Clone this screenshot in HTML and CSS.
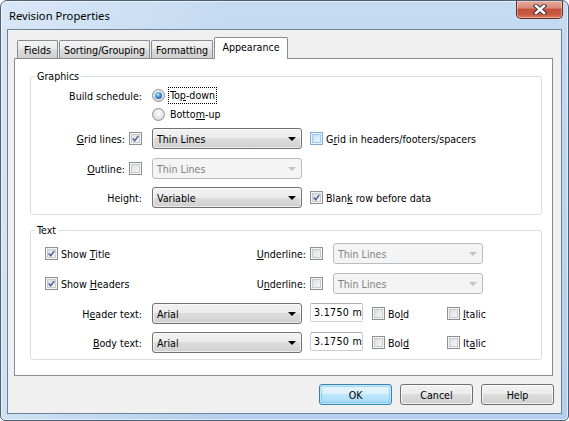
FILE: index.html
```html
<!DOCTYPE html>
<html lang="en">
<head>
<meta charset="utf-8">
<title>Revision Properties</title>
<link rel="stylesheet" href="styles.css">
</head>
<body>
<div class="window">
  <div class="titlebar">
    <span class="title">Revision Properties</span>
    <div class="close">
      <svg width="14" height="11" viewBox="0 0 14 11">
        <path d="M3 2 L11 9 M11 2 L3 9" stroke="#3a3a3a" stroke-width="4.4" stroke-linecap="square"/>
        <path d="M3 2 L11 9 M11 2 L3 9" stroke="#fff" stroke-width="2.4" stroke-linecap="square"/>
      </svg>
    </div>
  </div>

  <div class="client">
    <div class="tabs">
      <div class="tab w-fields">Fields</div>
      <div class="tab w-sort">Sorting/Grouping</div>
      <div class="tab w-format">Formatting</div>
      <div class="tab active w-appear">Appearance</div>
    </div>

    <div class="panel">
      <fieldset class="group graphics">
        <legend>Graphics</legend>

        <div class="row r-radio">
          <span class="lbl"><span>Build schedule:</span></span>
          <span class="radio checked"></span>
          <span class="rtext focus">To<u>p</u>-down</span>
        </div>
        <div class="row r-radio">
          <span class="lbl"></span>
          <span class="radio"></span>
          <span class="rtext">Botto<u>m</u>-up</span>
        </div>

        <div class="row r-ctl gap4">
          <span class="lbl"><span><u>G</u>rid lines:</span><span class="cb checked"><svg viewBox="0 0 13 13"><path d="M3.2 6.4 L5.6 9.2 L9.8 3.4"/></svg></span></span>
          <div class="select"><span>Thin Lines</span></div>
          <span class="cb hot after-select"></span>
          <span class="ctext">G<u>r</u>id in headers/footers/spacers</span>
        </div>

        <div class="row r-ctl gap9">
          <span class="lbl"><span><u>O</u>utline:</span><span class="cb"></span></span>
          <div class="select disabled"><span>Thin Lines</span></div>
        </div>

        <div class="row r-ctl gap8">
          <span class="lbl"><span>Height:</span></span>
          <div class="select"><span>Variable</span></div>
          <span class="cb checked after-select"><svg viewBox="0 0 13 13"><path d="M3.2 6.4 L5.6 9.2 L9.8 3.4"/></svg></span>
          <span class="ctext">Blan<u>k</u> row before data</span>
        </div>
      </fieldset>

      <fieldset class="group text">
        <legend>Text</legend>

        <div class="row r-ctl">
          <span class="left"><span class="cb checked"><svg viewBox="0 0 13 13"><path d="M3.2 6.4 L5.6 9.2 L9.8 3.4"/></svg></span><span class="ctext">Show <u>T</u>itle</span></span>
          <span class="ucell"><span><u>U</u>nderline:</span><span class="cb"></span></span>
          <div class="select disabled u-select"><span>Thin Lines</span></div>
        </div>

        <div class="row r-ctl gap9">
          <span class="left"><span class="cb checked"><svg viewBox="0 0 13 13"><path d="M3.2 6.4 L5.6 9.2 L9.8 3.4"/></svg></span><span class="ctext">Show <u>H</u>eaders</span></span>
          <span class="ucell"><span>U<u>n</u>derline:</span><span class="cb"></span></span>
          <div class="select disabled u-select"><span>Thin Lines</span></div>
        </div>

        <div class="row r-ctl gap9">
          <span class="lbl"><span>H<u>e</u>ader text:</span></span>
          <div class="select"><span>Arial</span></div>
          <span class="field">3.1750 m</span>
          <span class="style-cell"><span class="cb"></span><span class="ctext">Bo<u>l</u>d</span></span>
          <span class="cb"></span><span class="ctext"><u>I</u>talic</span>
        </div>

        <div class="row r-ctl gap8">
          <span class="lbl"><span><u>B</u>ody text:</span></span>
          <div class="select"><span>Arial</span></div>
          <span class="field">3.1750 m</span>
          <span class="style-cell"><span class="cb"></span><span class="ctext">Bol<u>d</u></span></span>
          <span class="cb"></span><span class="ctext">It<u>a</u>lic</span>
        </div>
      </fieldset>
    </div>

    <div class="buttons">
      <div class="btn default">OK</div>
      <div class="btn">Cancel</div>
      <div class="btn">Help</div>
    </div>
  </div>
</div>
</body>
</html>
```

FILE: styles.css
```css
* { box-sizing: border-box; }

html, body {
  margin: 0;
  padding: 0;
  background: #ffffff;
}

body {
  width: 569px;
  height: 421px;
  overflow: hidden;
  font-family: "DejaVu Sans Condensed", "DejaVu Sans", sans-serif;
  font-size: 10.6px;
  color: #000;
}

u { text-decoration: underline; text-underline-offset: 1px; }

/* ---------- window frame ---------- */
.window {
  width: 569px;
  height: 421px;
  display: flex;
  flex-direction: column;
  border: 1px solid #4f6074;
  border-radius: 7px 7px 5px 5px;
  background:
    linear-gradient(to right, rgba(255,255,255,0.35), rgba(255,255,255,0) 40%),
    linear-gradient(to bottom, #c5dbf2, #b3d0ee);
  box-shadow: inset 0 0 0 1px rgba(255,255,255,0.55);
}

.titlebar {
  height: 28px;
  flex: none;
  display: flex;
  align-items: flex-start;
  justify-content: space-between;
  padding-left: 8px;
  padding-right: 5px;
}

.title {
  font-family: "Noto Sans", "Open Sans", sans-serif;
  font-size: 11.2px;
  line-height: 16px;
  margin-top: 7px;
  color: #000;
}

.close {
  width: 47px;
  height: 18px;
  display: flex;
  align-items: center;
  justify-content: center;
  border: 1px solid #6c2b22;
  border-top: none;
  border-radius: 0 0 5px 5px;
  background: linear-gradient(to bottom, #e6aa9a 0%, #d98c78 40%, #c4503c 50%, #cc5a40 80%, #e08060 100%);
  box-shadow: inset 0 0 0 1px rgba(255,255,255,0.35);
}

/* ---------- client area ---------- */
.client {
  flex: 1;
  margin: 0 6px 6px 6px;
  border: 1px solid #6f8196;
  background: #f0f0f0;
  padding: 7px 7px 8px 6px;
  display: flex;
  flex-direction: column;
}

.tabs {
  display: flex;
  align-items: flex-end;
  height: 21px;
  padding-left: 3px;
  flex: none;
}

.tab {
  height: 18px;
  border: 1px solid #898c95;
  border-bottom: none;
  border-radius: 2px 2px 0 0;
  background: linear-gradient(to bottom, #f3f3f3 0%, #ebebeb 50%, #dddddd 50%, #cfcfcf 100%);
  display: flex;
  align-items: center;
  justify-content: center;
  line-height: 14px;
  padding-top: 1px;
  margin-right: 1px;
}

.tab.active {
  height: 22px;
  margin-bottom: -1px;
  position: relative;
  z-index: 1;
  background: #ffffff;
  padding-top: 0;
  padding-bottom: 4px;
}

.w-fields { width: 41px; }
.w-sort   { width: 91px; }
.w-format { width: 62px; }
.w-appear { width: 74px; }

.panel {
  width: 539px;
  height: 318px;
  flex: none;
  background: #ffffff;
  border: 1px solid #898c95;
  padding: 11px 10px 0 15px;
}

/* ---------- group boxes ---------- */
.group {
  margin: 0;
  border: 1px solid #d5dfe5;
  border-radius: 3px;
  min-inline-size: 0;
}

.group legend {
  margin-left: 4px;
  padding: 0 2px;
  line-height: 13px;
  height: 13px;
}

.graphics { padding: 3px 0 6px 0; }
.text     { padding: 6px 0 6px 0; margin-top: 9px; }

.row {
  display: flex;
  align-items: center;
}

.r-radio { height: 19px; }
.r-ctl   { height: 21px; }
.gap4 { margin-top: 4px; }
.gap8 { margin-top: 8px; }
.gap9 { margin-top: 9px; }

.lbl {
  width: 111px;
  margin-right: 10px;
  display: flex;
  justify-content: flex-end;
  align-items: center;
  gap: 4px;
  white-space: nowrap;
}

/* ---------- radios ---------- */
.radio {
  width: 13px;
  height: 13px;
  border-radius: 50%;
  border: 1px solid #8e8f8f;
  background: radial-gradient(circle at 50% 40%, #ffffff, #dcdcdc 70%, #c6c6c6);
  display: flex;
  align-items: center;
  justify-content: center;
  flex: none;
}

.radio.checked::after {
  content: "";
  width: 7px;
  height: 7px;
  border-radius: 50%;
  background: radial-gradient(circle at 40% 35%, #b8e6ff 0%, #3c8fd4 45%, #0e4f8c 100%);
}

.rtext {
  margin-left: 3px;
  padding: 1px 1px;
  border: 1px solid transparent;
  line-height: 13px;
}

.rtext.focus { border: 1px dotted #000; }

/* ---------- checkboxes ---------- */
.cb {
  width: 13px;
  height: 13px;
  flex: none;
  border: 1px solid #8e8f8f;
  background: linear-gradient(135deg, #d3d6da 0%, #eeeeee 60%, #fbfbfb 100%);
  box-shadow: inset 0 0 0 1px #f4f4f4, inset 0 0 0 2px #c8cbd0;
  display: inline-flex;
}

.cb.hot {
  border-color: #85abd5;
  background: linear-gradient(135deg, #b6dcf6 0%, #dbeefb 60%, #eef8fe 100%);
  box-shadow: inset 0 0 0 1px #e9f5fd, inset 0 0 0 2px #9fcaee;
}

.cb svg {
  width: 11px;
  height: 11px;
}

.cb svg path {
  fill: none;
  stroke: #4a5f98;
  stroke-width: 1.7;
}

.after-select { margin-left: 8px; }

.ctext {
  margin-left: 3px;
  white-space: nowrap;
}

/* ---------- drop-down lists ---------- */
.select {
  width: 150px;
  height: 21px;
  flex: none;
  border: 1px solid #707070;
  border-radius: 3px;
  background: linear-gradient(to bottom, #f2f2f2 0%, #ebebeb 50%, #dddddd 50%, #cfcfcf 100%);
  box-shadow: inset 0 0 0 1px rgba(255,255,255,0.6);
  display: flex;
  align-items: center;
  padding: 0 5px 0 4px;
}

.select::after {
  content: "";
  margin-left: auto;
  border-left: 4px solid transparent;
  border-right: 4px solid transparent;
  border-top: 4px solid #000;
}

.select.disabled {
  border-color: #b9bdc1;
  background: #f4f4f4;
  box-shadow: none;
  color: #838383;
}

.select.disabled::after { border-top-color: #c4c4c4; }

.left {
  width: 220px;
  padding-left: 14px;
  display: flex;
  align-items: center;
}

.ucell {
  width: 72px;
  display: flex;
  justify-content: flex-end;
  align-items: center;
  gap: 4px;
  white-space: nowrap;
}

.u-select { margin-left: 10px; }

/* ---------- size field and style toggles ---------- */
.field {
  width: 53px;
  height: 19px;
  margin-left: 8px;
  margin-top: -2px;
  border: 1px solid #c9ced4;
  border-top-color: #abadb3;
  border-radius: 2px;
  background: #fff;
  padding-left: 3px;
  line-height: 17px;
  white-space: nowrap;
  overflow: hidden;
  letter-spacing: 0.3px;
}

.style-cell {
  width: 75px;
  margin-left: 9px;
  display: flex;
  align-items: center;
}

/* ---------- dialog buttons ---------- */
.buttons {
  display: flex;
  justify-content: flex-end;
  gap: 8px;
  margin-top: 8px;
  flex: none;
}

.btn {
  width: 73px;
  height: 21px;
  border: 1px solid #707070;
  border-radius: 3px;
  background: linear-gradient(to bottom, #f2f2f2 0%, #ebebeb 50%, #dddddd 50%, #cfcfcf 100%);
  box-shadow: inset 0 0 0 1px rgba(255,255,255,0.75);
  display: flex;
  align-items: center;
  justify-content: center;
}

.btn.default {
  border-color: #3c7fb1;
  background: linear-gradient(to bottom, #eaf6fd 0%, #d9f0fc 50%, #bee6fd 50%, #a7d9f5 100%);
  box-shadow: inset 0 0 0 1px #c3e8fb, inset 0 0 1px 2px rgba(72,180,230,0.45);
}
```
